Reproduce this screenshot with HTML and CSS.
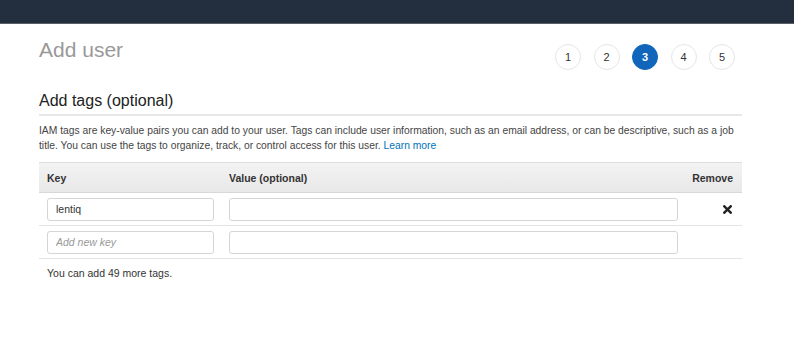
FILE: index.html
```html
<!DOCTYPE html>
<html lang="en">
<head>
    <meta charset="UTF-8">
    <meta name="viewport" content="width=device-width, initial-scale=1.0">
    <title>Add user</title>
    <link rel="stylesheet" href="styles.css">
</head>
<body>
    <div class="topbar"></div>

    <div class="container">
        <div class="header">
            <h1>Add user</h1>
            <div class="steps">
                <div class="step">1</div>
                <div class="step">2</div>
                <div class="step active">3</div>
                <div class="step">4</div>
                <div class="step">5</div>
            </div>
        </div>

        <h2>Add tags (optional)</h2>
        <p class="intro">IAM tags are key-value pairs you can add to your user. Tags can include user information, such as an email address, or can be descriptive, such as a job title. You can use the tags to organize, track, or control access for this user. <a href="#">Learn more</a></p>

        <div class="tags">
            <div class="row head">
                <div class="cell key">Key</div>
                <div class="cell">Value (optional)</div>
                <div class="cell remove">Remove</div>
            </div>
            <div class="row">
                <div class="cell key"><input type="text" value="lentiq"></div>
                <div class="cell"><input type="text"></div>
                <div class="cell remove">
                    <svg width="9" height="9" viewBox="0 0 9 9"><path d="M1.3 1.3 L7.7 7.7 M7.7 1.3 L1.3 7.7" stroke="#222" stroke-width="2.4" stroke-linecap="square"/></svg>
                </div>
            </div>
            <div class="row">
                <div class="cell key"><input type="text" placeholder="Add new key"></div>
                <div class="cell"><input type="text"></div>
                <div class="cell remove"></div>
            </div>
        </div>

        <p class="note">You can add 49 more tags.</p>
    </div>
</body>
</html>
```

FILE: styles.css
```css
* {
    margin: 0;
    padding: 0;
    box-sizing: border-box;
    font-family: "Liberation Sans", Arial, sans-serif;
}

body {
    background: white;
    color: #333;
}

.topbar {
    height: 24px;
    background: #232f3e;
    border-bottom: 1px solid #5a5f66;
}

.container {
    margin: 0 52px 0 39px;
}

.header {
    display: flex;
    justify-content: space-between;
    align-items: flex-start;
    padding-top: 14px;
    height: 54px;
}

h1 {
    font-size: 21px;
    line-height: 24px;
    font-weight: normal;
    color: #999;
}

.steps {
    display: flex;
    gap: 12.5px;
    margin: 6px 7px 0 0;
}

.step {
    width: 26px;
    height: 26px;
    border-radius: 50%;
    border: 1px solid #e6e6e6;
    display: flex;
    align-items: center;
    justify-content: center;
    font-size: 11px;
    color: #333;
}

.step.active {
    background: #1166bb;
    border-color: #1166bb;
    color: white;
    font-weight: bold;
}

h2 {
    font-size: 16px;
    font-weight: normal;
    color: #222;
    padding: 14px 0 4px;
    border-bottom: 2px solid #e8e8e8;
}

.intro {
    font-size: 10.3px;
    line-height: 15px;
    color: #444;
    margin: 7px 0 9px;
}

.intro a {
    color: #0073bb;
    text-decoration: none;
}

.row {
    display: grid;
    grid-template-columns: 190px 1fr 64px;
    align-items: center;
    border-bottom: 1px solid #e4e4e4;
    height: 33px;
}

.row.head {
    height: 31px;
    background: linear-gradient(#f3f3f3, #e8e8e8);
    border-top: 1px solid #dcdcdc;
    border-bottom: 1px solid #d8d8d8;
    font-size: 10.5px;
    font-weight: bold;
    color: #333;
}

.cell.key {
    padding-left: 8px;
}

.row.head .cell.remove {
    text-align: right;
    padding-right: 9px;
}

.row .cell.remove {
    display: flex;
    justify-content: flex-end;
    padding-right: 10px;
}

input {
    width: 100%;
    height: 23px;
    padding: 0 8px;
    border: 1px solid #d5d5d5;
    border-radius: 3px;
    font-size: 10.5px;
    color: #333;
}

.cell.key input {
    width: 167px;
}

input::placeholder {
    color: #999;
    font-style: italic;
}

.note {
    font-size: 10.5px;
    color: #333;
    padding: 8px 0 0 8px;
}
```
